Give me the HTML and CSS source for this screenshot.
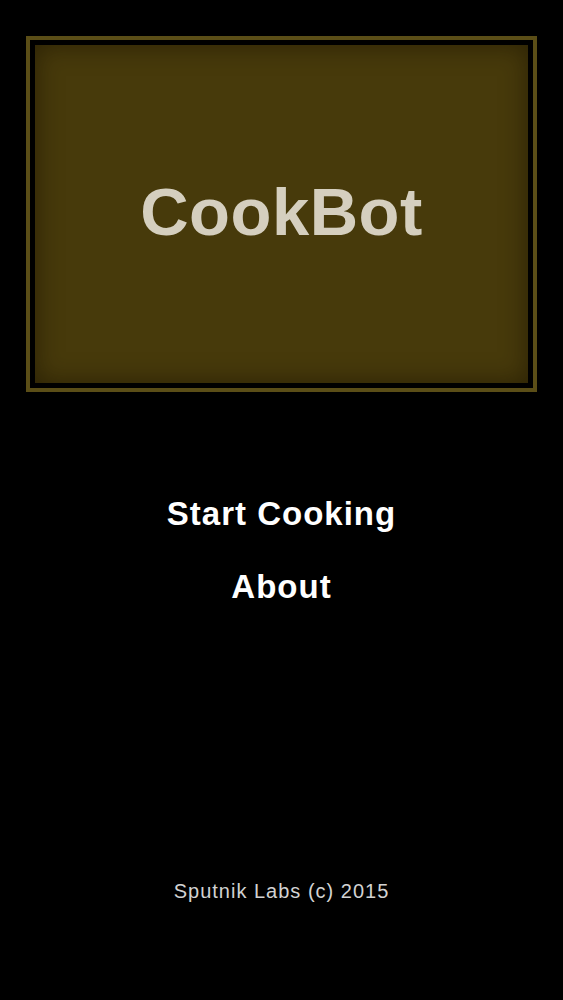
FILE: index.html
```html
<!DOCTYPE html>
<html lang="en">
<head>
    <meta charset="UTF-8">
    <title>CookBot</title>
    <link rel="stylesheet" href="styles.css">
</head>
<body>
    <div class="screen">
        <div class="title-frame">
            <div class="title-panel">
                <h1>CookBot</h1>
            </div>
        </div>

        <nav class="menu">
            <a href="#" class="menu-item">Start Cooking</a>
            <a href="#" class="menu-item">About</a>
        </nav>

        <footer class="credits">Sputnik Labs (c) 2015</footer>
    </div>
</body>
</html>
```

FILE: styles.css
```css
html, body {
    margin: 0;
    background-color: #000;
}
body {
    font-family: "Liberation Sans", Arial, sans-serif;
}
.screen {
    display: flex;
    flex-direction: column;
    height: 1000px;
    padding: 36px 26px 0;
    box-sizing: border-box;
}
.title-frame {
    height: 356px;
    border: 4px solid #5b4e17;
    padding: 5px;
    box-sizing: border-box;
    background-color: #000;
}
.title-panel {
    height: 100%;
    display: flex;
    align-items: center;
    justify-content: center;
    background-color: #473a0b;
    box-shadow: inset 0 0 24px 2px rgba(25, 18, 0, 0.55);
}
.title-panel h1 {
    margin: 0 0 6px;
    font-size: 67px;
    font-weight: bold;
    color: #d5cfbf;
    letter-spacing: 0.5px;
}
.menu {
    display: flex;
    flex-direction: column;
    align-items: center;
    gap: 37px;
    margin-top: 104px;
}
.menu-item {
    color: #fff;
    text-decoration: none;
    font-size: 33px;
    font-weight: bold;
    letter-spacing: 1px;
    line-height: 36px;
}
.credits {
    margin-top: auto;
    margin-bottom: 97px;
    text-align: center;
    color: #d2d2d2;
    font-size: 20px;
    letter-spacing: 1px;
}
```
